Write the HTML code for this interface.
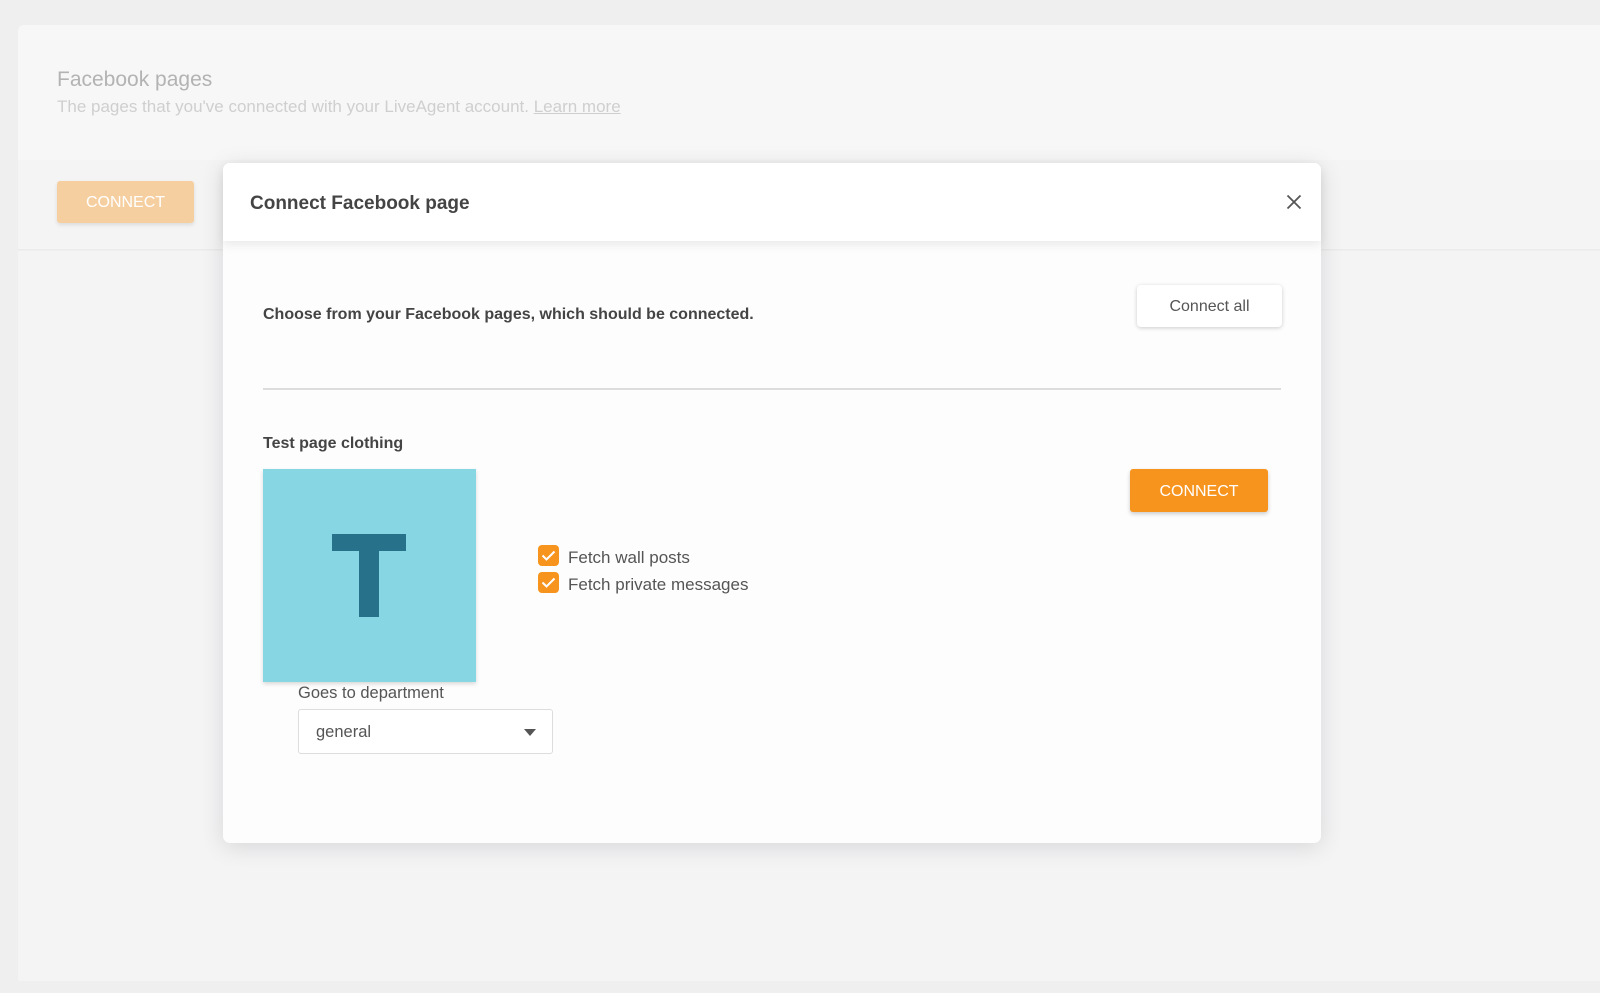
<!DOCTYPE html>
<html><head><meta charset="utf-8"><style>
*{box-sizing:border-box;margin:0;padding:0}
body{width:1600px;height:993px;background:#efefef;font-family:"Liberation Sans",sans-serif;position:relative;overflow:hidden}
.a{position:absolute}
</style></head><body>
<div class="a" style="left:18px;top:25px;width:1582px;height:135px;background:#f7f7f7;border-radius:6px 0 0 0"></div>
<div class="a" style="left:18px;top:160px;width:1582px;height:90px;background:#f4f4f4;border-bottom:1px solid #ebebeb"></div>
<div class="a" style="left:18px;top:251px;width:1582px;height:730px;background:#f4f4f5"></div>
<div class="a" style="left:57px;top:68px;font-size:21px;color:#b3b3b3">Facebook pages</div>
<div class="a" style="left:57px;top:97px;font-size:17px;color:#cfcfcf">The pages that you've connected with your LiveAgent account. <span style="text-decoration:underline">Learn more</span></div>
<div class="a" style="left:57px;top:181px;width:137px;height:42px;background:#f6cfa0;border-radius:3px;color:#fff;font-size:16px;text-align:center;line-height:44px;box-shadow:0 2px 4px rgba(0,0,0,.1)">CONNECT</div>

<div class="a" style="left:223px;top:163px;width:1098px;height:680px;background:#fdfdfd;border-radius:7px;box-shadow:0 4px 24px rgba(0,0,0,.12)">
 <div class="a" style="left:0;top:0;width:1098px;height:78px;background:#fff;border-radius:7px 7px 0 0;box-shadow:0 4px 10px rgba(0,0,0,.08)"></div>
 <div class="a" style="left:27px;top:30px;font-size:19px;font-weight:bold;color:#444">Connect Facebook page</div>
 <svg class="a" style="left:1063px;top:31px" width="16" height="16" viewBox="0 0 16 16"><path d="M1.5 1.5L14.5 14.5M14.5 1.5L1.5 14.5" stroke="#555" stroke-width="1.8"/></svg>
 <div class="a" style="left:40px;top:143px;font-size:16px;font-weight:bold;color:#444">Choose from your Facebook pages, which should be connected.</div>
 <div class="a" style="left:914px;top:122px;width:145px;height:42px;background:#fff;border-radius:4px;box-shadow:0 1px 4px rgba(0,0,0,.2);font-size:16px;color:#555;text-align:center;line-height:44px">Connect all</div>
 <div class="a" style="left:40px;top:225px;width:1018px;height:2px;background:#ddd"></div>
 <div class="a" style="left:40px;top:272px;font-size:16px;font-weight:bold;color:#444">Test page clothing</div>
 <div class="a" style="left:40px;top:306px;width:213px;height:213px;background:#87d6e3;box-shadow:0 2px 4px rgba(0,0,0,.15)">
  <div class="a" style="left:69px;top:65px;width:74px;height:17px;background:#27718b"></div>
  <div class="a" style="left:96px;top:65px;width:20px;height:83px;background:#27718b"></div>
 </div>
 <div class="a" style="left:907px;top:306px;width:138px;height:43px;background:#f7941d;border-radius:3px;color:#fff;font-size:16px;text-align:center;line-height:45px;box-shadow:0 2px 4px rgba(0,0,0,.2)">CONNECT</div>
 <svg class="a" style="left:315px;top:382px" width="21" height="21" viewBox="0 0 21 21"><rect width="21" height="21" rx="4" fill="#f7941d"/><path d="M4.5 10.5l4 4 8-8" stroke="#fff" stroke-width="2" fill="none"/></svg>
 <svg class="a" style="left:315px;top:409px" width="21" height="21" viewBox="0 0 21 21"><rect width="21" height="21" rx="4" fill="#f7941d"/><path d="M4.5 10.5l4 4 8-8" stroke="#fff" stroke-width="2" fill="none"/></svg>
 <div class="a" style="left:345px;top:385px;font-size:17px;color:#555">Fetch wall posts</div>
 <div class="a" style="left:345px;top:412px;font-size:17px;color:#555">Fetch private messages</div>
 <div class="a" style="left:75px;top:521px;font-size:16.5px;color:#555">Goes to department</div>
 <div class="a" style="left:75px;top:546px;width:255px;height:45px;background:#fff;border:1px solid #ddd;border-radius:3px">
  <div class="a" style="left:17px;top:13px;font-size:16.5px;color:#555">general</div>
  <svg class="a" style="left:225px;top:19px" width="12" height="8" viewBox="0 0 12 8"><path d="M0 0h12L6 7z" fill="#555"/></svg>
 </div>
</div>
</body></html>
